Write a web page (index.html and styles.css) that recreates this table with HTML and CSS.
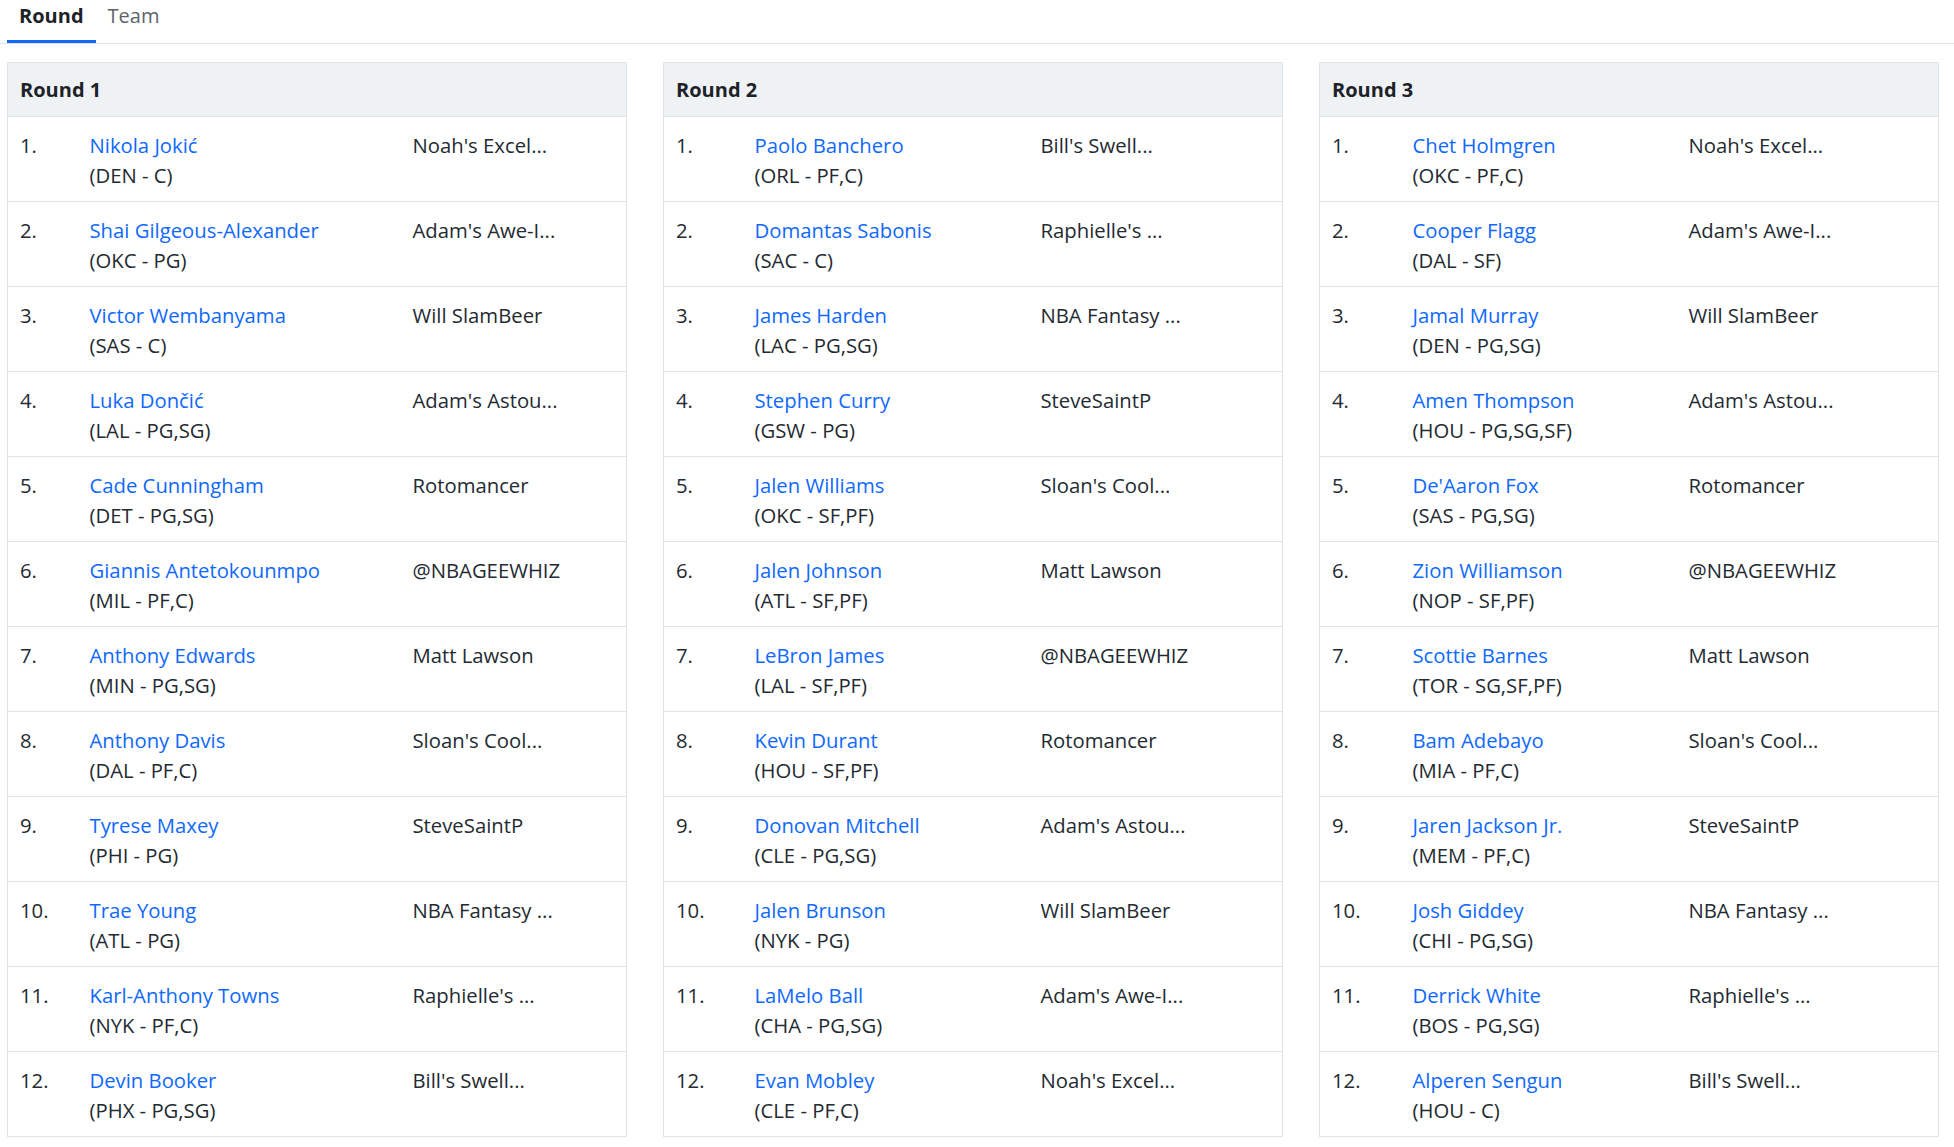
FILE: index.html
```html
<!DOCTYPE html>
<html lang="en">
<head>
<meta charset="utf-8">
<title>Draft Results</title>
<link rel="stylesheet" href="styles.css">
</head>
<body>
<nav class="tabs">
  <a class="tab active" href="#">Round</a>
  <a class="tab" href="#">Team</a>
</nav>
<main class="rounds">
  <table class="draft r1">
    <colgroup><col class="c-num"><col class="c-player"><col class="c-team"></colgroup>
    <thead><tr><th colspan="3">Round 1</th></tr></thead>
    <tbody>
      <tr><td>1.</td><td><a href="#">Nikola Jokić</a><br>(DEN - C)</td><td>Noah's Excel...</td></tr>
      <tr><td>2.</td><td><a href="#">Shai Gilgeous-Alexander</a><br>(OKC - PG)</td><td>Adam's Awe-I...</td></tr>
      <tr><td>3.</td><td><a href="#">Victor Wembanyama</a><br>(SAS - C)</td><td>Will SlamBeer</td></tr>
      <tr><td>4.</td><td><a href="#">Luka Dončić</a><br>(LAL - PG,SG)</td><td>Adam's Astou...</td></tr>
      <tr><td>5.</td><td><a href="#">Cade Cunningham</a><br>(DET - PG,SG)</td><td>Rotomancer</td></tr>
      <tr><td>6.</td><td><a href="#">Giannis Antetokounmpo</a><br>(MIL - PF,C)</td><td>@NBAGEEWHIZ</td></tr>
      <tr><td>7.</td><td><a href="#">Anthony Edwards</a><br>(MIN - PG,SG)</td><td>Matt Lawson</td></tr>
      <tr><td>8.</td><td><a href="#">Anthony Davis</a><br>(DAL - PF,C)</td><td>Sloan's Cool...</td></tr>
      <tr><td>9.</td><td><a href="#">Tyrese Maxey</a><br>(PHI - PG)</td><td>SteveSaintP</td></tr>
      <tr><td>10.</td><td><a href="#">Trae Young</a><br>(ATL - PG)</td><td>NBA Fantasy ...</td></tr>
      <tr><td>11.</td><td><a href="#">Karl-Anthony Towns</a><br>(NYK - PF,C)</td><td>Raphielle's ...</td></tr>
      <tr><td>12.</td><td><a href="#">Devin Booker</a><br>(PHX - PG,SG)</td><td>Bill's Swell...</td></tr>
    </tbody>
  </table>
  <table class="draft r2">
    <colgroup><col class="c-num"><col class="c-player"><col class="c-team"></colgroup>
    <thead><tr><th colspan="3">Round 2</th></tr></thead>
    <tbody>
      <tr><td>1.</td><td><a href="#">Paolo Banchero</a><br>(ORL - PF,C)</td><td>Bill's Swell...</td></tr>
      <tr><td>2.</td><td><a href="#">Domantas Sabonis</a><br>(SAC - C)</td><td>Raphielle's ...</td></tr>
      <tr><td>3.</td><td><a href="#">James Harden</a><br>(LAC - PG,SG)</td><td>NBA Fantasy ...</td></tr>
      <tr><td>4.</td><td><a href="#">Stephen Curry</a><br>(GSW - PG)</td><td>SteveSaintP</td></tr>
      <tr><td>5.</td><td><a href="#">Jalen Williams</a><br>(OKC - SF,PF)</td><td>Sloan's Cool...</td></tr>
      <tr><td>6.</td><td><a href="#">Jalen Johnson</a><br>(ATL - SF,PF)</td><td>Matt Lawson</td></tr>
      <tr><td>7.</td><td><a href="#">LeBron James</a><br>(LAL - SF,PF)</td><td>@NBAGEEWHIZ</td></tr>
      <tr><td>8.</td><td><a href="#">Kevin Durant</a><br>(HOU - SF,PF)</td><td>Rotomancer</td></tr>
      <tr><td>9.</td><td><a href="#">Donovan Mitchell</a><br>(CLE - PG,SG)</td><td>Adam's Astou...</td></tr>
      <tr><td>10.</td><td><a href="#">Jalen Brunson</a><br>(NYK - PG)</td><td>Will SlamBeer</td></tr>
      <tr><td>11.</td><td><a href="#">LaMelo Ball</a><br>(CHA - PG,SG)</td><td>Adam's Awe-I...</td></tr>
      <tr><td>12.</td><td><a href="#">Evan Mobley</a><br>(CLE - PF,C)</td><td>Noah's Excel...</td></tr>
    </tbody>
  </table>
  <table class="draft r3">
    <colgroup><col class="c-num"><col class="c-player"><col class="c-team"></colgroup>
    <thead><tr><th colspan="3">Round 3</th></tr></thead>
    <tbody>
      <tr><td>1.</td><td><a href="#">Chet Holmgren</a><br>(OKC - PF,C)</td><td>Noah's Excel...</td></tr>
      <tr><td>2.</td><td><a href="#">Cooper Flagg</a><br>(DAL - SF)</td><td>Adam's Awe-I...</td></tr>
      <tr><td>3.</td><td><a href="#">Jamal Murray</a><br>(DEN - PG,SG)</td><td>Will SlamBeer</td></tr>
      <tr><td>4.</td><td><a href="#">Amen Thompson</a><br>(HOU - PG,SG,SF)</td><td>Adam's Astou...</td></tr>
      <tr><td>5.</td><td><a href="#">De'Aaron Fox</a><br>(SAS - PG,SG)</td><td>Rotomancer</td></tr>
      <tr><td>6.</td><td><a href="#">Zion Williamson</a><br>(NOP - SF,PF)</td><td>@NBAGEEWHIZ</td></tr>
      <tr><td>7.</td><td><a href="#">Scottie Barnes</a><br>(TOR - SG,SF,PF)</td><td>Matt Lawson</td></tr>
      <tr><td>8.</td><td><a href="#">Bam Adebayo</a><br>(MIA - PF,C)</td><td>Sloan's Cool...</td></tr>
      <tr><td>9.</td><td><a href="#">Jaren Jackson Jr.</a><br>(MEM - PF,C)</td><td>SteveSaintP</td></tr>
      <tr><td>10.</td><td><a href="#">Josh Giddey</a><br>(CHI - PG,SG)</td><td>NBA Fantasy ...</td></tr>
      <tr><td>11.</td><td><a href="#">Derrick White</a><br>(BOS - PG,SG)</td><td>Raphielle's ...</td></tr>
      <tr><td>12.</td><td><a href="#">Alperen Sengun</a><br>(HOU - C)</td><td>Bill's Swell...</td></tr>
    </tbody>
  </table>
</main>
</body>
</html>
```

FILE: styles.css
```css
* { box-sizing: border-box; }

body {
  margin: 0;
  background: #ffffff;
  color: #232a31;
  font-family: "Open Sans", "Noto Sans", Arial, sans-serif;
  font-size: 20.3px;
  line-height: 30px;
}

.tabs {
  display: flex;
  padding-left: 7px;
  border-bottom: 1px solid #e0e4e9;
}

.tab {
  display: block;
  padding: 1px 12px 9px;
  border-bottom: 3px solid transparent;
  color: #5b636a;
  text-decoration: none;
  font-size: 20px;
  line-height: 30px;
}

.tab.active {
  color: #1d2228;
  font-weight: 700;
  border-bottom-color: #0f69ff;
}

.rounds {
  display: grid;
  grid-template-columns: repeat(3, 619px);
  column-gap: 37px;
  padding: 18px 0 0 7px;
  align-items: start;
}

.draft {
  width: 619px;
  table-layout: fixed;
  border-collapse: collapse;
  border: 1px solid #e0e4e9;
}

.draft th {
  background: #eff2f5;
  text-align: left;
  font-size: 20px;
  font-weight: 700;
  color: #1d2228;
  padding: 12px 12px 11px;
  border-bottom: 1px solid #e0e4e9;
}

.draft td {
  vertical-align: top;
  padding: 13px 12px 11px;
  border-top: 1px solid #e0e4e9;
  white-space: nowrap;
}

.draft a {
  color: #0f69ff;
  text-decoration: none;
}

.r1 .c-num { width: 70px; }
.r1 .c-player { width: 323px; }
.r1 .c-team { width: 226px; }

.r2 .c-num { width: 79px; }
.r2 .c-player { width: 286px; }
.r2 .c-team { width: 254px; }

.r3 .c-num { width: 81px; }
.r3 .c-player { width: 276px; }
.r3 .c-team { width: 262px; }
```
